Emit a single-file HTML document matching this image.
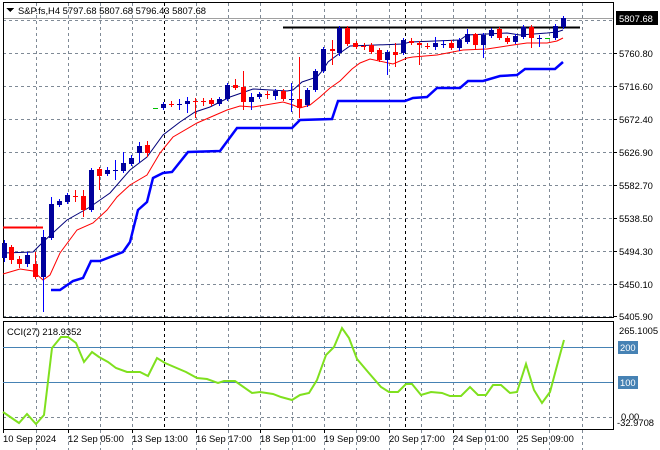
<!DOCTYPE html>
<html><head><meta charset="utf-8"><style>
html,body{margin:0;padding:0;background:#fff;overflow:hidden;}
body{width:660px;height:450px;overflow:hidden;font-family:"Liberation Sans",sans-serif;}
svg{display:block;}
svg text{font-family:"Liberation Sans",sans-serif;font-size:9.4px;fill:#000;}
</style></head><body>
<svg width="660" height="450" xmlns="http://www.w3.org/2000/svg" shape-rendering="crispEdges">
<rect width="660" height="450" fill="#fff"/>
<g stroke="#7f8a96" stroke-dasharray="3,3" stroke-width="1">
<line x1="3" y1="20.5" x2="613" y2="20.5"/><line x1="3" y1="53.5" x2="613" y2="53.5"/><line x1="3" y1="86.5" x2="613" y2="86.5"/><line x1="3" y1="119.5" x2="613" y2="119.5"/><line x1="3" y1="152.5" x2="613" y2="152.5"/><line x1="3" y1="185.5" x2="613" y2="185.5"/><line x1="3" y1="218.5" x2="613" y2="218.5"/><line x1="3" y1="251.5" x2="613" y2="251.5"/><line x1="3" y1="284.5" x2="613" y2="284.5"/><line x1="3" y1="316.5" x2="613" y2="316.5"/>
<line x1="3" y1="417.5" x2="613" y2="417.5"/>
<g id="vg">
<line x1="36.5" y1="3" x2="36.5" y2="317"/><line x1="68.5" y1="3" x2="68.5" y2="317"/><line x1="100.5" y1="3" x2="100.5" y2="317"/><line x1="132.5" y1="3" x2="132.5" y2="317"/><line x1="196.5" y1="3" x2="196.5" y2="317"/><line x1="228.5" y1="3" x2="228.5" y2="317"/><line x1="260.5" y1="3" x2="260.5" y2="317"/><line x1="292.5" y1="3" x2="292.5" y2="317"/><line x1="324.5" y1="3" x2="324.5" y2="317"/><line x1="356.5" y1="3" x2="356.5" y2="317"/><line x1="389.5" y1="3" x2="389.5" y2="317"/><line x1="421.5" y1="3" x2="421.5" y2="317"/><line x1="453.5" y1="3" x2="453.5" y2="317"/><line x1="485.5" y1="3" x2="485.5" y2="317"/><line x1="517.5" y1="3" x2="517.5" y2="317"/><line x1="549.5" y1="3" x2="549.5" y2="317"/><line x1="582.5" y1="3" x2="582.5" y2="317"/>
</g>
<use href="#vg" transform="translate(0,319)"/>
</g>
<g stroke="#000" stroke-dasharray="3,3">
<line x1="164.5" y1="3" x2="164.5" y2="317"/><line x1="405.5" y1="3" x2="405.5" y2="317"/>
<line x1="164.5" y1="322" x2="164.5" y2="429"/><line x1="405.5" y1="322" x2="405.5" y2="429"/>
</g>
<line x1="3" y1="18.5" x2="613" y2="18.5" stroke="#a0a0a0"/>
<rect x="3.5" y="2.5" width="610" height="315" fill="none" stroke="#000"/>
<rect x="3.5" y="321.5" width="610" height="108" fill="none" stroke="#000"/>
<line x1="3" y1="227.5" x2="43" y2="227.5" stroke="#f00" stroke-width="2"/>
<line x1="283" y1="27.5" x2="580" y2="27.5" stroke="#000" stroke-width="2"/>
<polyline fill="none" stroke="#0000ff" stroke-width="2.5" shape-rendering="auto" points="51,290 60,290 73,281 83,278 91,261 100,261 123,252 130,242 138,210 147,202 153,178 163,173 172,172 188,152 220,151 237,128 292,128 300,120 332,119 338,101 405,101 413,98 427,97 437,88 460,88 468,81 483,81 500,76 517,75 525,69 555,69 563,62"/>
<polyline fill="none" stroke="#f00" stroke-width="1" shape-rendering="auto" points="3,274 20,269 33,271 43,280 50,275 60,253 77,230 93,223 107,210 117,197 130,185 147,175 160,153 173,137 197,123 227,110 240,106 253,107 283,102 293,105 300,108 310,105 320,97 330,88 340,81 352,69 360,63 370,59 393,64 407,58 413,57 437,55 463,50 487,49 513,45 527,43 547,43 557,41 563,38"/>
<polyline fill="none" stroke="#00007a" stroke-width="1" shape-rendering="auto" points="3,253 33,252 43,242 67,220 90,207 110,193 130,170 147,157 163,135 180,122 195,112 210,107 230,97 253,89 287,91 293,90 302,82 317,77 323,70 328,62 340,53 350,46 403,44 410,42 460,40 467,35 507,33 520,35 547,33 557,32 563,30"/>
<g shape-rendering="crispEdges">
<g stroke="#0000ff" stroke-width="1">
<line x1="4.5" y1="240" x2="4.5" y2="262"/><line x1="27.5" y1="252" x2="27.5" y2="267"/><line x1="43.5" y1="230" x2="43.5" y2="312"/><line x1="51.5" y1="197" x2="51.5" y2="240"/><line x1="59.5" y1="199" x2="59.5" y2="207"/><line x1="67.5" y1="193" x2="67.5" y2="204"/><line x1="91.5" y1="168" x2="91.5" y2="212"/><line x1="107.5" y1="167" x2="107.5" y2="176"/><line x1="115.5" y1="160" x2="115.5" y2="180"/><line x1="123.5" y1="152" x2="123.5" y2="173"/><line x1="131.5" y1="155" x2="131.5" y2="166"/><line x1="139.5" y1="142" x2="139.5" y2="163"/>
<line x1="163.5" y1="102" x2="163.5" y2="110"/><line x1="179.5" y1="99" x2="179.5" y2="110"/><line x1="187.5" y1="97" x2="187.5" y2="113"/><line x1="219.5" y1="97" x2="219.5" y2="106"/><line x1="227.5" y1="83" x2="227.5" y2="101"/><line x1="251.5" y1="93" x2="251.5" y2="110"/><line x1="259.5" y1="92" x2="259.5" y2="99"/><line x1="275.5" y1="89" x2="275.5" y2="100"/><line x1="291.5" y1="83" x2="291.5" y2="112"/><line x1="307.5" y1="88" x2="307.5" y2="107"/><line x1="315.5" y1="69" x2="315.5" y2="92"/><line x1="323.5" y1="47" x2="323.5" y2="73"/><line x1="339.5" y1="26" x2="339.5" y2="56"/><line x1="387.5" y1="50" x2="387.5" y2="75"/><line x1="403.5" y1="38" x2="403.5" y2="55"/><line x1="435.5" y1="37" x2="435.5" y2="50"/><line x1="443.5" y1="40" x2="443.5" y2="48"/><line x1="459.5" y1="38" x2="459.5" y2="51"/><line x1="467.5" y1="29" x2="467.5" y2="44"/><line x1="483.5" y1="33" x2="483.5" y2="58"/><line x1="491.5" y1="28" x2="491.5" y2="38"/><line x1="515.5" y1="34" x2="515.5" y2="44"/><line x1="523.5" y1="25" x2="523.5" y2="39"/><line x1="539.5" y1="35" x2="539.5" y2="47"/><line x1="555.5" y1="24" x2="555.5" y2="40"/><line x1="563.5" y1="16" x2="563.5" y2="29"/>
</g>
<g stroke="#f00" stroke-width="1">
<line x1="11.5" y1="245" x2="11.5" y2="264"/><line x1="19.5" y1="256" x2="19.5" y2="268"/><line x1="35.5" y1="252" x2="35.5" y2="279"/><line x1="75.5" y1="190" x2="75.5" y2="202"/><line x1="83.5" y1="190" x2="83.5" y2="217"/><line x1="99.5" y1="167" x2="99.5" y2="190"/><line x1="147.5" y1="141" x2="147.5" y2="157"/>
<line x1="171.5" y1="101" x2="171.5" y2="107"/><line x1="195.5" y1="98" x2="195.5" y2="118"/><line x1="203.5" y1="98" x2="203.5" y2="106"/><line x1="211.5" y1="98" x2="211.5" y2="106"/><line x1="235.5" y1="79" x2="235.5" y2="90"/><line x1="243.5" y1="71" x2="243.5" y2="110"/><line x1="267.5" y1="91" x2="267.5" y2="99"/><line x1="283.5" y1="89" x2="283.5" y2="101"/><line x1="299.5" y1="57" x2="299.5" y2="118"/><line x1="332.5" y1="40" x2="332.5" y2="65"/><line x1="347.5" y1="26" x2="347.5" y2="46"/><line x1="356.5" y1="41" x2="356.5" y2="49"/><line x1="364.5" y1="43" x2="364.5" y2="50"/><line x1="371.5" y1="43" x2="371.5" y2="54"/><line x1="379.5" y1="48" x2="379.5" y2="62"/><line x1="395.5" y1="43" x2="395.5" y2="67"/><line x1="411.5" y1="38" x2="411.5" y2="45"/><line x1="419.5" y1="41" x2="419.5" y2="65"/><line x1="427.5" y1="43" x2="427.5" y2="49"/><line x1="451.5" y1="40" x2="451.5" y2="50"/><line x1="475.5" y1="33" x2="475.5" y2="50"/><line x1="499.5" y1="27" x2="499.5" y2="40"/><line x1="507.5" y1="36" x2="507.5" y2="44"/><line x1="531.5" y1="25" x2="531.5" y2="48"/>
</g>
<g fill="#00009c">
<rect x="2" y="243" width="5" height="15"/><rect x="25" y="255" width="5" height="9"/><rect x="41" y="237" width="5" height="40"/><rect x="49" y="204" width="5" height="34"/><rect x="57" y="201" width="5" height="4"/><rect x="65" y="195" width="5" height="7"/><rect x="89" y="170" width="5" height="40"/><rect x="105" y="170" width="5" height="4"/><rect x="113" y="170" width="5" height="1"/><rect x="121" y="163" width="5" height="8"/><rect x="129" y="158" width="5" height="6"/><rect x="137" y="146" width="5" height="7"/>
<rect x="161" y="104" width="5" height="4"/><rect x="177" y="104" width="5" height="1"/><rect x="185" y="101" width="5" height="3"/><rect x="217" y="99" width="5" height="5"/><rect x="225" y="85" width="5" height="14"/><rect x="249" y="97" width="5" height="5"/><rect x="257" y="94" width="5" height="3"/><rect x="273" y="91" width="5" height="5"/><rect x="289" y="99" width="5" height="1"/><rect x="305" y="90" width="5" height="15"/><rect x="313" y="71" width="5" height="19"/><rect x="321" y="49" width="5" height="22"/><rect x="337" y="28" width="5" height="25"/><rect x="385" y="52" width="5" height="8"/><rect x="401" y="40" width="5" height="13"/><rect x="433" y="43" width="5" height="4"/><rect x="441" y="44" width="5" height="1"/><rect x="457" y="40" width="5" height="8"/><rect x="465" y="34" width="5" height="8"/><rect x="481" y="35" width="5" height="10"/><rect x="489" y="30" width="5" height="6"/><rect x="513" y="36" width="5" height="6"/><rect x="521" y="27" width="5" height="10"/><rect x="537" y="38" width="5" height="1"/><rect x="553" y="26" width="5" height="12"/><rect x="561" y="18" width="5" height="9"/>
</g>
<g fill="#f00">
<rect x="9" y="247" width="5" height="13"/><rect x="17" y="259" width="5" height="5"/><rect x="33" y="264" width="5" height="13"/><rect x="73" y="196" width="5" height="1"/><rect x="81" y="196" width="5" height="14"/><rect x="97" y="169" width="5" height="7"/><rect x="145" y="145" width="5" height="8"/>
<rect x="169" y="104" width="5" height="1"/><rect x="193" y="101" width="5" height="1"/><rect x="201" y="101" width="5" height="1"/><rect x="209" y="100" width="5" height="4"/><rect x="233" y="85" width="5" height="3"/><rect x="241" y="87" width="5" height="15"/><rect x="265" y="94" width="5" height="1"/><rect x="281" y="91" width="5" height="8"/><rect x="297" y="99" width="5" height="9"/><rect x="330" y="49" width="5" height="2"/><rect x="345" y="28" width="5" height="16"/><rect x="353" y="43" width="5" height="4"/><rect x="361" y="46" width="5" height="1"/><rect x="369" y="45" width="5" height="7"/><rect x="377" y="50" width="5" height="10"/><rect x="393" y="52" width="5" height="3"/><rect x="409" y="41" width="5" height="2"/><rect x="417" y="43" width="5" height="2"/><rect x="425" y="46" width="5" height="1"/><rect x="449" y="43" width="5" height="5"/><rect x="473" y="34" width="5" height="11"/><rect x="497" y="29" width="5" height="9"/><rect x="505" y="38" width="5" height="4"/><rect x="529" y="27" width="5" height="11"/>
</g>
<rect x="153" y="108" width="5" height="1" fill="#00c000"/><rect x="545" y="38" width="5" height="1" fill="#00c000"/>
</g>
<line x1="3" y1="347.5" x2="613" y2="347.5" stroke="#4682b4"/>
<line x1="3" y1="382.5" x2="613" y2="382.5" stroke="#4682b4"/>
<polyline fill="none" stroke="#7fe01e" stroke-width="2" shape-rendering="auto" points="3,412 19,423 27,414 36,424 44,415 52,348 61,337 68,337 76,343 84,362 92,352 99,357 108,362 116,368 127,372 140,372 148,376 157,358 165,363 186,372 197,378 207,379 218,383 224,381 235,381 252,393 260,392 273,394 281,397 292,400 300,395 309,393 317,380 326,355 334,347 342,328 349,338 357,359 368,372 381,387 389,392 398,392 406,384 412,384 421,395 431,392 442,393 450,396 461,396 470,387 478,395 486,395 493,385 501,385 510,393 517,392 526,364 534,390 542,403 550,392 558,362 564,340"/>
<path d="M6 8 L14 8 L10 12 Z" fill="#000"/>
<text x="18" y="14">S&amp;P.fs,H4  5797.68 5807.68 5796.43 5807.68</text>
<text x="7" y="335">CCI(27) 218.9352</text>
<g stroke="#000"><line x1="613" y1="53.5" x2="617" y2="53.5"/><line x1="613" y1="86.5" x2="617" y2="86.5"/><line x1="613" y1="119.5" x2="617" y2="119.5"/><line x1="613" y1="152.5" x2="617" y2="152.5"/><line x1="613" y1="185.5" x2="617" y2="185.5"/><line x1="613" y1="218.5" x2="617" y2="218.5"/><line x1="613" y1="251.5" x2="617" y2="251.5"/><line x1="613" y1="284.5" x2="617" y2="284.5"/><line x1="613" y1="316.5" x2="617" y2="316.5"/></g>
<rect x="616" y="11" width="42" height="14" fill="#000"/>
<text x="619" y="22" style="fill:#fff">5807.68</text>
<text x="619" y="57">5760.80</text><text x="619" y="90">5716.60</text><text x="619" y="123">5672.40</text><text x="619" y="156">5626.90</text><text x="619" y="189">5582.70</text><text x="619" y="222">5538.50</text><text x="619" y="255">5494.30</text><text x="619" y="288">5450.10</text><text x="619" y="320">5405.90</text>
<text x="619" y="334">265.1005</text>
<rect x="618" y="341" width="20" height="13" fill="#4682b4"/><text x="620" y="351" style="fill:#fff">200</text>
<rect x="618" y="376" width="20" height="13" fill="#4682b4"/><text x="620" y="386" style="fill:#fff">100</text>
<text x="621" y="420">0.00</text><text x="617" y="426">-32.9708</text>
<g stroke="#000"><line x1="3.5" y1="429" x2="3.5" y2="433"/><line x1="68.5" y1="429" x2="68.5" y2="433"/><line x1="132.5" y1="429" x2="132.5" y2="433"/><line x1="196.5" y1="429" x2="196.5" y2="433"/><line x1="260.5" y1="429" x2="260.5" y2="433"/><line x1="324.5" y1="429" x2="324.5" y2="433"/><line x1="389.5" y1="429" x2="389.5" y2="433"/><line x1="453.5" y1="429" x2="453.5" y2="433"/><line x1="517.5" y1="429" x2="517.5" y2="433"/></g>
<text x="3" y="442">10 Sep 2024</text><text x="68" y="442">12 Sep 05:00</text><text x="132" y="442">13 Sep 13:00</text><text x="196" y="442">16 Sep 17:00</text><text x="260" y="442">18 Sep 01:00</text><text x="324" y="442">19 Sep 09:00</text><text x="389" y="442">20 Sep 17:00</text><text x="453" y="442">24 Sep 01:00</text><text x="518" y="442">25 Sep 09:00</text>
</svg>
</body></html>
